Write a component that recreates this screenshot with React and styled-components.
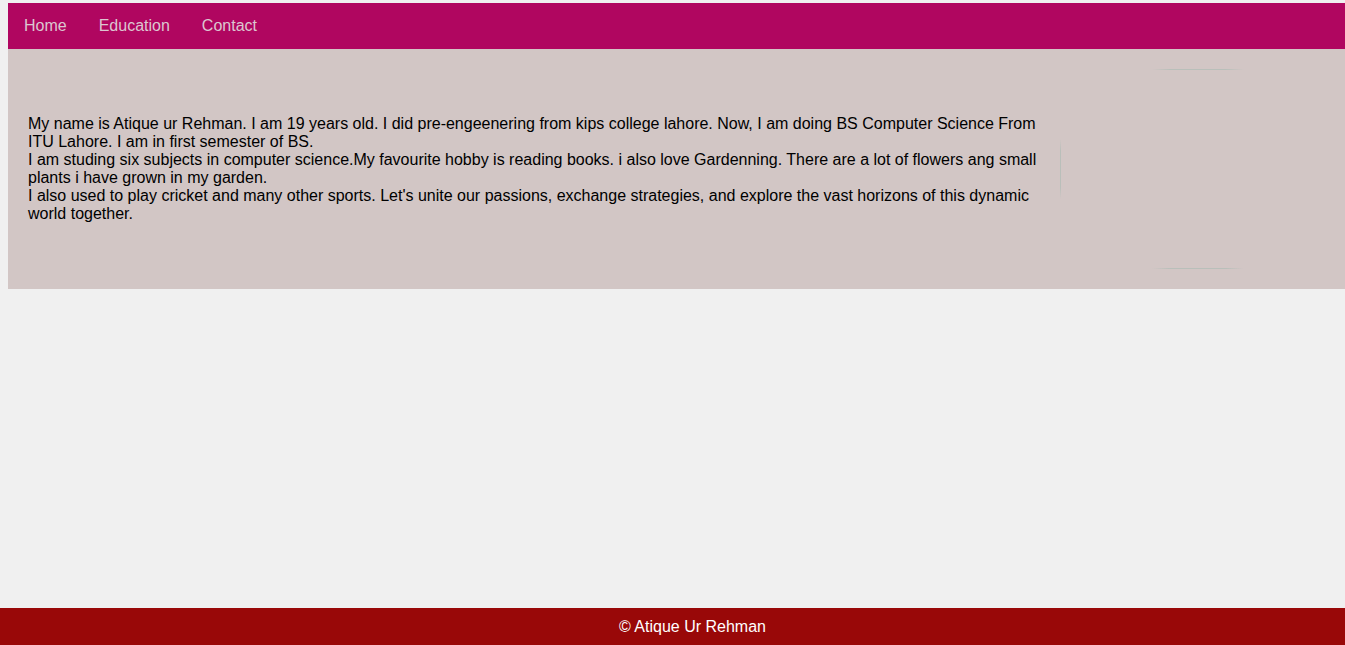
import React from 'react';
import styled, { createGlobalStyle } from 'styled-components';

const GlobalStyle = createGlobalStyle`
    html, body {
        margin: 0;
        padding: 0;
        background: #f0f0f0;
        font-family: "Liberation Sans", Arial, sans-serif;
    }
`;

const Page = styled.div`
    padding: 3px 0 0 8px;
    min-height: 642px;
`;

const Nav = styled.nav`
    display: flex;
    align-items: center;
    height: 46px;
    background: #b00660;
`;

const NavLink = styled.a`
    padding: 0 16px;
    color: #dcc6d0;
    font-size: 16px;
    text-decoration: none;
    cursor: pointer;
`;

const About = styled.section`
    display: flex;
    align-items: center;
    height: 240px;
    padding: 0 20px;
    background: #d2c6c5;
`;

const Text = styled.p`
    width: 1012px;
    margin: 0;
    font-size: 16px;
    line-height: 18px;
    color: #000;
`;

const Divider = styled.div`
    width: 1px;
    height: 60px;
    margin-left: 20px;
    background: linear-gradient(to bottom, transparent, #b9bfba 20%, #b9bfba 80%, transparent);
`;

const Frame = styled.div`
    position: relative;
    width: 92px;
    height: 200px;
    margin-left: 91px;

    &::before,
    &::after {
        content: '';
        position: absolute;
        left: 0;
        right: 0;
        height: 1px;
        background: linear-gradient(to right, transparent, #b9bfba 20%, #b9bfba 80%, transparent);
    }
    &::before { top: 0; }
    &::after { bottom: 0; }
`;

const Footer = styled.footer`
    position: fixed;
    left: 0;
    right: 0;
    bottom: 0;
    height: 37px;
    padding-left: 40px;
    display: flex;
    align-items: center;
    justify-content: center;
    background: #990808;
    color: #fff;
    font-size: 16px;
`;

const App = () => {
    return (
        <Page>
            <GlobalStyle />
            <Nav>
                <NavLink>Home</NavLink>
                <NavLink>Education</NavLink>
                <NavLink>Contact</NavLink>
            </Nav>
            <About>
                <Text>
                    My name is Atique ur Rehman. I am 19 years old. I did pre-engeenering from kips college lahore. Now, I am doing BS Computer Science From ITU Lahore. I am in first semester of BS.
                    <br />
                    I am studing six subjects in computer science.My favourite hobby is reading books. i also love Gardenning. There are a lot of flowers ang small plants i have grown in my garden.
                    <br />
                    I also used to play cricket and many other sports. Let's unite our passions, exchange strategies, and explore the vast horizons of this dynamic world together.
                </Text>
                <Divider />
                <Frame />
            </About>
            <Footer>© Atique Ur Rehman</Footer>
        </Page>
    );
};

export default App;
